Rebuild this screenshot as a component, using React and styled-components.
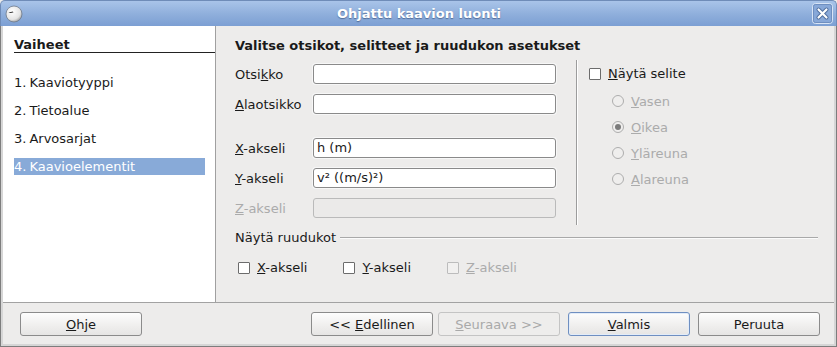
import React from 'react';
import styled, { createGlobalStyle } from 'styled-components';

const GlobalStyle = createGlobalStyle`
  html, body { margin: 0; padding: 0; background: #ffffff; }
  body {
    font-family: "DejaVu Sans", Verdana, sans-serif;
    font-size: 13px;
    color: #1a1a1a;
  }
  * { box-sizing: border-box; }
`;

const Window = styled.div`
  width: 837px;
  height: 347px;
  display: flex;
  flex-direction: column;
  background: #edeceb;
`;

const TitleBar = styled.div`
  height: 26px;
  flex: none;
  display: flex;
  align-items: center;
  padding: 0 3px 0 4px;
  border: 1px solid #6f8cb8;
  border-bottom: none;
  border-radius: 5px 5px 0 0;
  background: linear-gradient(#a9c4e9, #8eaedb 55%, #7c9fd3);
`;

const TitleSlot = styled.div`
  width: 26px;
  display: flex;
  justify-content: ${({ $end }) => ($end ? 'flex-end' : 'flex-start')};
`;

const TitleText = styled.div`
  flex: 1;
  text-align: center;
  color: #ffffff;
  font-weight: bold;
  font-size: 13px;
  text-shadow: 0 1px 1px rgba(40, 60, 100, 0.55);
`;

const Frame = styled.div`
  flex: 1;
  display: flex;
  flex-direction: column;
  border: solid #7d7d7d;
  border-width: 0 1px 1px;
  padding: 0 2px 2px;
  background: #d6d6d6;
`;

const Body = styled.div`
  flex: 1;
  display: flex;
  border-bottom: 1px solid #a2a2a2;
`;

const Sidebar = styled.div`
  width: 213px;
  flex: none;
  background: #ffffff;
  border-right: 1px solid #a0a0a0;
  padding: 11px 0 0 11px;
`;

const SidebarTitle = styled.div`
  font-weight: bold;
  line-height: 15px;
  border-bottom: 1px solid #222;
  margin-bottom: 21px;
`;

const StepList = styled.div`
  display: flex;
  flex-direction: column;
  gap: 11px;
  padding-right: 10px;
`;

const Step = styled.div`
  height: 17px;
  line-height: 17px;
  display: flex;
  color: ${({ $active }) => ($active ? '#ffffff' : '#1a1a1a')};
  background: ${({ $active }) => ($active ? '#88aad8' : 'transparent')};
`;

const StepNo = styled.span`
  margin-right: 3px;
`;

const Content = styled.div`
  flex: 1;
  padding: 12px 0 0 19px;
  display: flex;
  flex-direction: column;
  background: #edeceb;
`;

const Heading = styled.div`
  font-weight: bold;
  line-height: 16px;
`;

const MainRow = styled.div`
  display: flex;
  align-items: flex-start;
  margin-top: 6px;
`;

const Fields = styled.div`
  display: flex;
  flex-direction: column;
  gap: 10px;
  padding-top: 4px;
`;

const FieldRow = styled.div`
  display: flex;
  align-items: center;
  height: 20px;
  margin-top: ${({ $spaced }) => ($spaced ? '14px' : '0')};
`;

const FieldLabel = styled.div`
  width: 78px;
  color: ${({ $disabled }) => ($disabled ? '#ababab' : '#1a1a1a')};
`;

const TextInput = styled.div`
  width: 243px;
  height: 20px;
  line-height: 18px;
  padding-left: 3px;
  border: 1px solid ${({ $disabled }) => ($disabled ? '#bababa' : '#8a8a8a')};
  border-radius: 3px;
  background: ${({ $disabled }) => ($disabled ? '#ebeae9' : '#ffffff')};
  box-shadow: 0 0 0 1px ${({ $disabled }) => ($disabled ? 'transparent' : '#f7f7f7')};
`;

const VSeparator = styled.div`
  width: 2px;
  height: 165px;
  margin-left: 20px;
  border-left: 1px solid #9c9c9c;
  border-right: 1px solid #ffffff;
`;

const Legend = styled.div`
  margin-left: 11px;
  padding-top: 7px;
  display: flex;
  flex-direction: column;
`;

const CheckRow = styled.div`
  display: flex;
  align-items: center;
  gap: 7px;
  height: 13px;
  color: ${({ $disabled }) => ($disabled ? '#ababab' : '#1a1a1a')};
`;

const Box = styled.span`
  width: 12px;
  height: 12px;
  flex: none;
  border: 1px solid ${({ $disabled }) => ($disabled ? '#bcbcbc' : '#6c6c6c')};
  border-radius: 1px;
  background: ${({ $disabled }) => ($disabled ? '#f1f0ef' : '#ffffff')};
`;

const RadioList = styled.div`
  display: flex;
  flex-direction: column;
  gap: 10px;
  margin-top: 13px;
  padding-left: 23px;
`;

const RadioRow = styled.div`
  display: flex;
  align-items: center;
  gap: 7px;
  height: 16px;
  color: #ababab;
`;

const Radio = styled.span`
  width: 12px;
  height: 12px;
  flex: none;
  border-radius: 50%;
  border: 1px solid #adadad;
  background: #efeeed;
  display: flex;
  align-items: center;
  justify-content: center;
  &::after {
    content: '';
    width: 6px;
    height: 6px;
    border-radius: 50%;
    background: ${({ $checked }) => ($checked ? '#7b7b7b' : 'transparent')};
  }
`;

const GroupHeader = styled.div`
  display: flex;
  align-items: center;
  margin-top: 5px;
  line-height: 16px;
  padding-right: 16px;
`;

const GroupLine = styled.div`
  flex: 1;
  margin-left: 4px;
  border-top: 1px solid #a9a9a9;
  border-bottom: 1px solid #fbfbfb;
`;

const GridChecks = styled.div`
  display: flex;
  gap: 36px;
  margin-top: 15px;
  padding-left: 3px;
`;

const Footer = styled.div`
  height: 41px;
  flex: none;
  display: flex;
  align-items: flex-start;
  padding: 9px 14px 0 17px;
  background: #edeceb;
`;

const Button = styled.div`
  width: 122px;
  height: 24px;
  display: flex;
  align-items: center;
  justify-content: center;
  white-space: pre;
  margin-left: ${({ $gap }) => $gap || 0}px;
  border: 1px solid ${({ $default, $disabled }) => ($default ? '#6f8fc1' : $disabled ? '#c4c4c4' : '#8b8b8b')};
  border-radius: 3px;
  background: ${({ $disabled }) => ($disabled ? '#eeedec' : 'linear-gradient(#fdfdfd, #efeeed 60%, #e6e5e4)')};
  box-shadow: ${({ $default }) => ($default ? 'inset 0 0 0 1px #e3ecf8' : 'none')};
  color: ${({ $disabled }) => ($disabled ? '#a9a9a9' : '#1a1a1a')};
`;

const Spacer = styled.div`
  flex: 1;
`;

const AppIcon = () => (
  <svg width="18" height="18" viewBox="0 0 18 18">
    <defs>
      <radialGradient id="ball" cx="40%" cy="35%" r="70%">
        <stop offset="0%" stopColor="#ffffff" />
        <stop offset="70%" stopColor="#e4e4e4" />
        <stop offset="100%" stopColor="#9a9a9a" />
      </radialGradient>
    </defs>
    <circle cx="9" cy="9" r="8" fill="url(#ball)" stroke="#6d7a8c" strokeWidth="0.8" />
    <path d="M3.5 7.2 L6 7 L7.5 6.4 L8.6 7.2 L7 7.8 L5.2 8 Z" fill="#2a2a2a" />
  </svg>
);

const CloseIcon = () => (
  <svg width="21" height="21" viewBox="0 0 21 21">
    <rect x="0.5" y="0.5" width="20" height="20" rx="3" fill="#88a8d8" stroke="#d8e4f5" />
    <rect x="1.5" y="1.5" width="18" height="18" rx="2" fill="none" stroke="#6f8fc0" />
    <path d="M6.5 6.5 L14.5 14.5 M14.5 6.5 L6.5 14.5" stroke="#4d6c9c" strokeWidth="4" strokeLinecap="round" />
    <path d="M6.5 6.5 L14.5 14.5 M14.5 6.5 L6.5 14.5" stroke="#ffffff" strokeWidth="2.2" strokeLinecap="round" />
  </svg>
);

const steps = [
  ['1.', 'Kaaviotyyppi'],
  ['2.', 'Tietoalue'],
  ['3.', 'Arvosarjat'],
  ['4.', 'Kaavioelementit'],
];

export default function App() {
  return (
    <>
      <GlobalStyle />
      <Window>
        <TitleBar>
          <TitleSlot><AppIcon /></TitleSlot>
          <TitleText>Ohjattu kaavion luonti</TitleText>
          <TitleSlot $end><CloseIcon /></TitleSlot>
        </TitleBar>
        <Frame>
          <Body>
            <Sidebar>
              <SidebarTitle>Vaiheet</SidebarTitle>
              <StepList>
                {steps.map(([no, name], i) => (
                  <Step key={name} $active={i === 3}>
                    <StepNo>{no}</StepNo>
                    <span>{name}</span>
                  </Step>
                ))}
              </StepList>
            </Sidebar>
            <Content>
              <Heading>Valitse otsikot, selitteet ja ruudukon asetukset</Heading>
              <MainRow>
                <Fields>
                  <FieldRow>
                    <FieldLabel>Otsi<u>k</u>ko</FieldLabel>
                    <TextInput />
                  </FieldRow>
                  <FieldRow>
                    <FieldLabel><u>A</u>laotsikko</FieldLabel>
                    <TextInput />
                  </FieldRow>
                  <FieldRow $spaced>
                    <FieldLabel><u>X</u>-akseli</FieldLabel>
                    <TextInput>h (m)</TextInput>
                  </FieldRow>
                  <FieldRow>
                    <FieldLabel><u>Y</u>-akseli</FieldLabel>
                    <TextInput>v² ((m/s)²)</TextInput>
                  </FieldRow>
                  <FieldRow>
                    <FieldLabel $disabled><u>Z</u>-akseli</FieldLabel>
                    <TextInput $disabled />
                  </FieldRow>
                </Fields>
                <VSeparator />
                <Legend>
                  <CheckRow>
                    <Box />
                    <span><u>N</u>äytä selite</span>
                  </CheckRow>
                  <RadioList>
                    <RadioRow><Radio /><span><u>V</u>asen</span></RadioRow>
                    <RadioRow><Radio $checked /><span><u>O</u>ikea</span></RadioRow>
                    <RadioRow><Radio /><span><u>Y</u>läreuna</span></RadioRow>
                    <RadioRow><Radio /><span><u>A</u>lareuna</span></RadioRow>
                  </RadioList>
                </Legend>
              </MainRow>
              <GroupHeader>
                <span>Näytä ruudukot</span>
                <GroupLine />
              </GroupHeader>
              <GridChecks>
                <CheckRow><Box /><span><u>X</u>-akseli</span></CheckRow>
                <CheckRow><Box /><span><u>Y</u>-akseli</span></CheckRow>
                <CheckRow $disabled><Box $disabled /><span><u>Z</u>-akseli</span></CheckRow>
              </GridChecks>
            </Content>
          </Body>
          <Footer>
            <Button><span><u>O</u>hje</span></Button>
            <Spacer />
            <Button><span>&lt;&lt; <u>E</u>dellinen</span></Button>
            <Button $gap={5} $disabled><span><u>S</u>euraava &gt;&gt;</span></Button>
            <Button $gap={8} $default><span><u>V</u>almis</span></Button>
            <Button $gap={8}>Peruuta</Button>
          </Footer>
        </Frame>
      </Window>
    </>
  );
}
